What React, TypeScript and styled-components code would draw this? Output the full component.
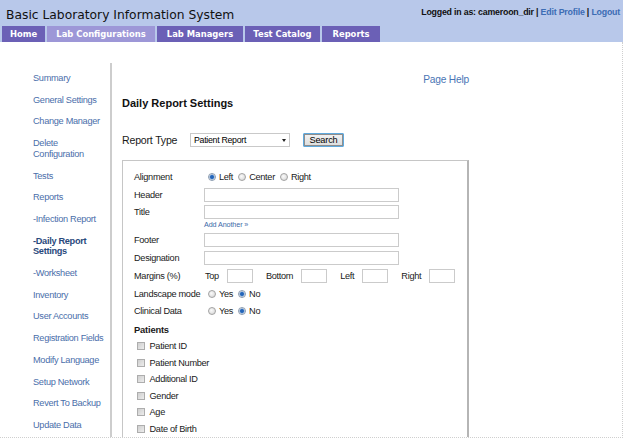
import React from 'react';
import styled, { createGlobalStyle } from 'styled-components';

const GlobalStyle = createGlobalStyle`
  html, body { margin: 0; padding: 0; background: #fff; }
  body { font-family: "Liberation Sans", Arial, sans-serif; }
  * { box-sizing: border-box; }
`;

const Frame = styled.div`
  width: 623px;
  height: 438px;
  overflow: hidden;
  display: flex;
  flex-direction: column;
`;

const Header = styled.header`
  flex: none;
  height: 42px;
  background: #b8c8ea;
  display: flex;
  flex-direction: column;
`;

const TitleRow = styled.div`
  height: 26px;
  display: flex;
  justify-content: space-between;
  align-items: flex-start;
  padding: 0 3px 0 6px;
`;

const Title = styled.h1`
  margin: 4px 0 0;
  font-family: "DejaVu Sans", Verdana, sans-serif;
  font-weight: normal;
  font-size: 12.3px;
  line-height: 22px;
  color: #111;
  white-space: nowrap;
`;

const UserInfo = styled.div`
  margin-top: 5px;
  font-weight: bold;
  font-size: 8.8px;
  letter-spacing: -0.2px;
  line-height: 14px;
  color: #111;
  white-space: nowrap;
`;

const UserLink = styled.a`
  color: #3c6cb4;
  text-decoration: none;
`;

const TabBar = styled.nav`
  display: flex;
  gap: 2px;
  padding-left: 2px;
  height: 16px;
`;

const Tab = styled.a<{ $w: number; $active?: boolean }>`
  width: ${(p) => p.$w}px;
  display: flex;
  align-items: center;
  justify-content: center;
  background: ${(p) => (p.$active ? '#9d97d7' : '#6b60b6')};
  color: #fff;
  font-family: "DejaVu Sans", Verdana, sans-serif;
  font-weight: bold;
  font-size: 8.4px;
  text-decoration: none;
  white-space: nowrap;
`;

const Body = styled.div`
  flex: 1;
  min-height: 0;
  display: flex;
  border-right: 1px dotted #cfcfcf;
  border-bottom: 1px dotted #cfcfcf;
`;

const Sidebar = styled.aside`
  flex: none;
  width: 112px;
  margin-top: 21px;
  border-right: 2px solid #cdcdcd;
  padding: 10px 0 0 33px;
  display: flex;
  flex-direction: column;
  gap: 11px;
`;

const SideLink = styled.a<{ $active?: boolean }>`
  font-size: 9.2px;
  letter-spacing: -0.3px;
  line-height: 10.7px;
  color: ${(p) => (p.$active ? '#29497c' : '#4a6eaa')};
  font-weight: ${(p) => (p.$active ? 'bold' : 'normal')};
  text-decoration: none;
`;

const Main = styled.main`
  flex: none;
  width: 357px;
  padding: 32px 0 0 10px;
  display: flex;
  flex-direction: column;
`;

const PageHelp = styled.a`
  align-self: flex-end;
  font-size: 10.2px;
  letter-spacing: -0.2px;
  line-height: 12px;
  color: #4a75b5;
  text-decoration: none;
`;

const Heading = styled.h2`
  margin: 10px 0 0;
  font-size: 11px;
  line-height: 14px;
  font-weight: bold;
  color: #111;
`;

const ReportRow = styled.div`
  margin-top: 23px;
  height: 15px;
  display: flex;
  align-items: center;
`;

const ReportLabel = styled.label`
  width: 68px;
  font-size: 10.6px;
  letter-spacing: -0.2px;
  color: #1a1a1a;
`;

const SelectWrap = styled.span`
  position: relative;
  display: inline-flex;
  width: 100px;
  height: 14px;
  &::after {
    content: '';
    position: absolute;
    right: 4px;
    top: 5.5px;
    border-left: 2.5px solid transparent;
    border-right: 2.5px solid transparent;
    border-top: 3px solid #222;
    pointer-events: none;
  }
`;

const Select = styled.select`
  appearance: none;
  width: 100%;
  height: 100%;
  border: 1px solid #c9c9c9;
  border-radius: 0;
  background: #fff;
  font: 8.8px "Liberation Sans", Arial, sans-serif;
  letter-spacing: -0.3px;
  padding: 0 0 0 3px;
  color: #000;
  outline: none;
`;

const SearchButton = styled.button`
  margin-left: 13px;
  width: 41px;
  height: 14px;
  padding: 0;
  border: 1px solid #5fa9dd;
  border-radius: 1px;
  box-shadow: inset 0 0 0 1px #8e8e8e;
  background: linear-gradient(#f3f3f3, #dcdcdc);
  font: 9.2px "Liberation Sans", Arial, sans-serif;
  letter-spacing: -0.2px;
  color: #000;
`;

const FormBox = styled.div`
  margin-top: 12px;
  flex: 1;
  width: 347px;
  border: 1px solid #c6c6c6;
  border-right: 2px solid #b5b5b5;
  border-bottom: none;
  padding: 8px 0 0 11px;
  display: flex;
  flex-direction: column;
  font-size: 9.2px;
  letter-spacing: -0.3px;
  color: #1a1a1a;
`;

const Row = styled.div<{ $h: number; $mt?: number }>`
  flex: none;
  display: flex;
  align-items: center;
  height: ${(p) => p.$h}px;
  margin-top: ${(p) => p.$mt ?? 0}px;
`;

const FieldLabel = styled.label`
  flex: none;
  width: 70px;
`;

const TextField = styled.input`
  width: 195px;
  height: 14px;
  border: 1px solid #cbcbcb;
  padding: 0 2px;
  font: 8.6px "Liberation Sans", Arial, sans-serif;
  outline: none;
`;

const AddAnother = styled.a`
  flex: none;
  margin-left: 70px;
  font-size: 7.2px;
  letter-spacing: -0.1px;
  line-height: 8px;
  color: #3d6aa8;
  text-decoration: none;
`;

const MarginLabel = styled.span`
  margin: 0 8px 0 1px;
`;

const MarginField = styled.input`
  width: 26px;
  height: 14px;
  margin-right: 12px;
  border: 1px solid #cbcbcb;
  padding: 0 2px;
  font: 8.6px "Liberation Sans", Arial, sans-serif;
  outline: none;
`;

const RadioGroup = styled.div`
  display: flex;
  align-items: center;
  gap: 5px;
  padding-left: 4px;
`;

const Option = styled.label`
  display: inline-flex;
  align-items: center;
  gap: 3px;
`;

const Radio = styled.input.attrs({ type: 'radio' })`
  appearance: none;
  margin: 0;
  width: 8px;
  height: 8px;
  border-radius: 50%;
  border: 1px solid #a2a2a2;
  background: radial-gradient(circle at 40% 40%, #fafafa, #d2d2d2);
  &:checked {
    border-color: #8a9bb0;
    background: radial-gradient(circle, #1c5cb0 0, #2f6fc0 1.6px, #9dbbe0 2.4px, #ececec 3px);
  }
`;

const PatientsHeading = styled.span`
  font-weight: bold;
  font-size: 9.4px;
  letter-spacing: -0.2px;
`;

const CheckRow = styled.label`
  flex: none;
  height: 16.5px;
  display: flex;
  align-items: center;
  gap: 5px;
  padding-left: 2.5px;
`;

const Checkbox = styled.input.attrs({ type: 'checkbox' })`
  appearance: none;
  margin: 0;
  width: 8px;
  height: 8px;
  border: 1px solid #adadad;
  background: linear-gradient(135deg, #cfcfcf, #ececec);
`;

const sideItems = [
  'Summary',
  'General Settings',
  'Change Manager',
  'Delete Configuration',
  'Tests',
  'Reports',
  '-Infection Report',
  '-Daily Report Settings',
  '-Worksheet',
  'Inventory',
  'User Accounts',
  'Registration Fields',
  'Modify Language',
  'Setup Network',
  'Revert To Backup',
  'Update Data',
];

const tabs: { label: string; w: number; active?: boolean }[] = [
  { label: 'Home', w: 43 },
  { label: 'Lab Configurations', w: 108, active: true },
  { label: 'Lab Managers', w: 86 },
  { label: 'Test Catalog', w: 75 },
  { label: 'Reports', w: 58 },
];

const patientFields = ['Patient ID', 'Patient Number', 'Additional ID', 'Gender', 'Age', 'Date of Birth'];

export default function App() {
  return (
    <>
      <GlobalStyle />
      <Frame>
        <Header>
          <TitleRow>
            <Title>Basic Laboratory Information System</Title>
            <UserInfo>
              Logged in as: cameroon_dir | <UserLink href="#">Edit Profile</UserLink> |{' '}
              <UserLink href="#">Logout</UserLink>
            </UserInfo>
          </TitleRow>
          <TabBar>
            {tabs.map((t) => (
              <Tab key={t.label} href="#" $w={t.w} $active={t.active}>
                {t.label}
              </Tab>
            ))}
          </TabBar>
        </Header>
        <Body>
          <Sidebar>
            {sideItems.map((s) => (
              <SideLink key={s} href="#" $active={s === '-Daily Report Settings'}>
                {s}
              </SideLink>
            ))}
          </Sidebar>
          <Main>
            <PageHelp href="#">Page Help</PageHelp>
            <Heading>Daily Report Settings</Heading>
            <ReportRow>
              <ReportLabel>Report Type</ReportLabel>
              <SelectWrap>
                <Select defaultValue="patient">
                  <option value="patient">Patient Report</option>
                </Select>
              </SelectWrap>
              <SearchButton>Search</SearchButton>
            </ReportRow>
            <FormBox>
              <Row $h={17}>
                <FieldLabel>Alignment</FieldLabel>
                <RadioGroup>
                  <Option><Radio name="align" defaultChecked />Left</Option>
                  <Option><Radio name="align" />Center</Option>
                  <Option><Radio name="align" />Right</Option>
                </RadioGroup>
              </Row>
              <Row $h={18}>
                <FieldLabel>Header</FieldLabel>
                <TextField />
              </Row>
              <Row $h={17}>
                <FieldLabel>Title</FieldLabel>
                <TextField />
              </Row>
              <AddAnother href="#">Add Another »</AddAnother>
              <Row $h={18} $mt={2}>
                <FieldLabel>Footer</FieldLabel>
                <TextField />
              </Row>
              <Row $h={18}>
                <FieldLabel>Designation</FieldLabel>
                <TextField />
              </Row>
              <Row $h={18}>
                <FieldLabel>Margins (%)</FieldLabel>
                <MarginLabel>Top</MarginLabel>
                <MarginField />
                <MarginLabel>Bottom</MarginLabel>
                <MarginField />
                <MarginLabel>Left</MarginLabel>
                <MarginField />
                <MarginLabel>Right</MarginLabel>
                <MarginField />
              </Row>
              <Row $h={18}>
                <FieldLabel>Landscape mode</FieldLabel>
                <RadioGroup>
                  <Option><Radio name="landscape" />Yes</Option>
                  <Option><Radio name="landscape" defaultChecked />No</Option>
                </RadioGroup>
              </Row>
              <Row $h={16}>
                <FieldLabel>Clinical Data</FieldLabel>
                <RadioGroup>
                  <Option><Radio name="clinical" />Yes</Option>
                  <Option><Radio name="clinical" defaultChecked />No</Option>
                </RadioGroup>
              </Row>
              <Row $h={16.5} $mt={3}>
                <PatientsHeading>Patients</PatientsHeading>
              </Row>
              {patientFields.map((f) => (
                <CheckRow key={f}>
                  <Checkbox />
                  {f}
                </CheckRow>
              ))}
            </FormBox>
          </Main>
        </Body>
      </Frame>
    </>
  );
}
